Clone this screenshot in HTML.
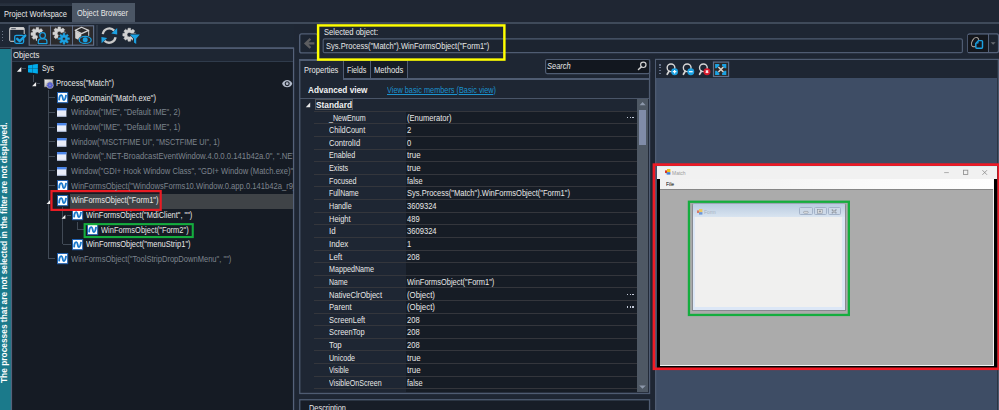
<!DOCTYPE html>
<html>
<head>
<meta charset="utf-8">
<title>Object Browser</title>
<style>
html,body{margin:0;padding:0;}
body{width:999px;height:410px;overflow:hidden;background:#1e2633;font-family:"Liberation Sans",sans-serif;font-size:8.6px;color:#e8e8e8;position:relative;}
.a{position:absolute;box-sizing:border-box;}
.t{position:absolute;white-space:nowrap;line-height:12px;height:12px;transform-origin:0 50%;}
svg{position:absolute;overflow:visible;}
</style>
</head>
<body>
<!-- ===== top strip and tabs ===== -->
<div class="a" style="left:0;top:0;width:999px;height:23px;background:#1f2633;"></div>
<div class="a" style="left:0;top:3.4px;width:72px;height:3px;background:linear-gradient(#232b38,#2b3442);"></div>
<div class="a" style="left:0;top:6px;width:72px;height:16.5px;background:#131a24;"></div>
<div class="a" style="left:71.8px;top:2.8px;width:63.2px;height:20.2px;background:#4b5665;"></div>
<div class="a" style="left:0;top:21.9px;width:999px;height:1.9px;background:#3f4a5a;"></div>

<!-- ===== left toolbar ===== -->
<div class="a" style="left:0;top:24px;width:294px;height:23.4px;background:#1e2734;"></div>
<div class="a" style="left:0;top:47.2px;width:294px;height:1.3px;background:#3a4656;"></div>
<div class="a" style="left:1.5px;top:30.7px;width:1.7px;height:1.3px;background:#6a7688;"></div>
<div class="a" style="left:1.5px;top:33.7px;width:1.7px;height:1.3px;background:#6a7688;"></div>
<div class="a" style="left:1.5px;top:36.6px;width:1.7px;height:1.3px;background:#6a7688;"></div>
<div class="a" style="left:1.5px;top:39.5px;width:1.7px;height:1.3px;background:#6a7688;"></div>
<svg style="left:0;top:0;" width="1" height="1"><rect x="29.20" y="25.80" width="64.40" height="19.40" rx="0.00" fill="#2b2a2c" stroke="#5f6d86" stroke-width="1.20"/></svg>
<div class="a" style="left:50.1px;top:25.2px;width:1px;height:20.6px;background:#5f6d86;"></div>
<div class="a" style="left:71.9px;top:25.2px;width:1px;height:20.6px;background:#5f6d86;"></div>
<div class="a" style="left:96.2px;top:25.4px;width:1.6px;height:20.6px;background:#2e3846;"></div>
<svg style="left:0;top:0;" width="160" height="50" viewBox="0 0 160 50"><path d="M14,41.3 H10.6 Q9.7,41.3 9.7,40.4 V28.5 Q9.7,27.6 10.6,27.6 H23.3 Q24.2,27.6 24.2,28.5 V34" fill="none" stroke="#d2d2d2" stroke-width="1"/><rect x="10" y="27.6" width="14" height="2.3" fill="#d2d2d2"/><rect x="11.2" y="28.3" width="4.6" height="0.9" fill="#3a4250"/><rect x="14.7" y="35.3" width="8.9" height="8" rx="1.5" fill="none" stroke="#1ba1e2" stroke-width="1.3"/><path d="M17.2,38.8 L19.7,41.2 L25.2,35.6" fill="none" stroke="#1ba1e2" stroke-width="2.4" stroke-linecap="round" stroke-linejoin="round"/><path d="M42.09,32.60 L43.78,32.73 L43.78,35.27 L42.09,35.40 L41.71,36.33 L42.80,37.61 L41.01,39.40 L39.73,38.31 L38.80,38.69 L38.67,40.38 L36.13,40.38 L36.00,38.69 L35.07,38.31 L33.79,39.40 L32.00,37.61 L33.09,36.33 L32.71,35.40 L31.02,35.27 L31.02,32.73 L32.71,32.60 L33.09,31.67 L32.00,30.39 L33.79,28.60 L35.07,29.69 L36.00,29.31 L36.13,27.62 L38.67,27.62 L38.80,29.31 L39.73,29.69 L41.01,28.60 L42.80,30.39 L41.71,31.67Z M35.30,34.00 a2.10,2.10 0 1,0 4.20,0 a2.10,2.10 0 1,0 -4.20,0Z" fill="#d2d2d2" fill-rule="evenodd" stroke="#d2d2d2" stroke-width="0.5" stroke-linejoin="round"/><circle cx="42.6" cy="37" r="5" fill="#2b2a2c"/><rect x="37" y="38" width="11.5" height="7" fill="#2b2a2c"/><circle cx="42.6" cy="35.5" r="2.8" fill="none" stroke="#1ba1e2" stroke-width="1.2"/><path d="M38.3,43.6 V41.6 Q38.3,38.9 41,38.9 H44.2 Q46.9,38.9 46.9,41.6 V43.6 Z" fill="none" stroke="#1ba1e2" stroke-width="1.2" stroke-linejoin="round"/><path d="M63.99,32.00 L65.68,32.13 L65.68,34.67 L63.99,34.80 L63.61,35.73 L64.70,37.01 L62.91,38.80 L61.63,37.71 L60.70,38.09 L60.57,39.78 L58.03,39.78 L57.90,38.09 L56.97,37.71 L55.69,38.80 L53.90,37.01 L54.99,35.73 L54.61,34.80 L52.92,34.67 L52.92,32.13 L54.61,32.00 L54.99,31.07 L53.90,29.79 L55.69,28.00 L56.97,29.09 L57.90,28.71 L58.03,27.02 L60.57,27.02 L60.70,28.71 L61.63,29.09 L62.91,28.00 L64.70,29.79 L63.61,31.07Z M57.20,33.40 a2.10,2.10 0 1,0 4.20,0 a2.10,2.10 0 1,0 -4.20,0Z" fill="#d2d2d2" fill-rule="evenodd" stroke="#d2d2d2" stroke-width="0.5" stroke-linejoin="round"/><circle cx="64" cy="38.7" r="6.4" fill="#2b2a2c"/><path d="M67.58,37.78 L69.43,37.84 L69.43,39.56 L67.58,39.62 L67.18,40.58 L68.45,41.93 L67.23,43.15 L65.88,41.88 L64.92,42.28 L64.86,44.13 L63.14,44.13 L63.08,42.28 L62.12,41.88 L60.77,43.15 L59.55,41.93 L60.82,40.58 L60.42,39.62 L58.57,39.56 L58.57,37.84 L60.42,37.78 L60.82,36.82 L59.55,35.47 L60.77,34.25 L62.12,35.52 L63.08,35.12 L63.14,33.27 L64.86,33.27 L64.92,35.12 L65.88,35.52 L67.23,34.25 L68.45,35.47 L67.18,36.82Z M62.50,38.70 a1.50,1.50 0 1,0 3.00,0 a1.50,1.50 0 1,0 -3.00,0Z" fill="#1ba1e2" fill-rule="evenodd" stroke="#1ba1e2" stroke-width="0.5" stroke-linejoin="round"/><polygon points="81.5,27.3 88.7,30.4 81.5,33.6 75.2,30.4" fill="#2b2a2c" stroke="#d2d2d2" stroke-width="1.2" stroke-linejoin="round"/><polygon points="75.2,30.9 81.3,34 81.3,41.3 75.2,38.2" fill="#d2d2d2"/><path d="M88.7,30.6 V36" fill="none" stroke="#d2d2d2" stroke-width="1"/><ellipse cx="85.2" cy="39.9" rx="7" ry="4.6" fill="#2b2a2c"/><ellipse cx="85.2" cy="39.9" rx="6.0" ry="3.5" fill="none" stroke="#1ba1e2" stroke-width="1.2"/><circle cx="85.2" cy="39.7" r="2.5" fill="#1ba1e2"/><path d="M102.8,34.2 A6.6,6.6 0 0 1 114.2,30.6" fill="none" stroke="#c9c9c9" stroke-width="2.3"/><path d="M115.6,37.3 A6.6,6.6 0 0 1 104.6,40.9" fill="none" stroke="#c9c9c9" stroke-width="2.3"/><polygon points="117.2,28 117.2,34.6 111.3,33.6" fill="#1ba1e2"/><polygon points="101.4,37 107.2,37.9 101.6,43.2" fill="#1ba1e2"/><path d="M134.09,33.27 L135.77,33.41 L135.77,35.99 L134.09,36.13 L133.70,37.07 L134.79,38.37 L132.97,40.19 L131.67,39.10 L130.73,39.49 L130.59,41.17 L128.01,41.17 L127.87,39.49 L126.93,39.10 L125.63,40.19 L123.81,38.37 L124.90,37.07 L124.51,36.13 L122.83,35.99 L122.83,33.41 L124.51,33.27 L124.90,32.33 L123.81,31.03 L125.63,29.21 L126.93,30.30 L127.87,29.91 L128.01,28.23 L130.59,28.23 L130.73,29.91 L131.67,30.30 L132.97,29.21 L134.79,31.03 L133.70,32.33Z M127.00,34.70 a2.30,2.30 0 1,0 4.60,0 a2.30,2.30 0 1,0 -4.60,0Z" fill="#d2d2d2" fill-rule="evenodd" stroke="#d2d2d2" stroke-width="0.5" stroke-linejoin="round"/><polygon points="128.6,33.6 141,33.6 137,38.4 137,44.6 133,43 133,38.4" fill="#1e2734"/><polygon points="129.9,34.4 139.8,34.4 136.2,38.8 136.2,43.9 134,42.4 134,38.8" fill="#1ba1e2"/></svg>

<!-- ===== left sidebar + tree ===== -->
<div class="a" style="left:0;top:48.5px;width:10.6px;height:362px;background:#1b7a8b;"></div>
<svg style="left:0;top:0;" width="1" height="1"><rect x="11.45" y="48.25" width="282.10" height="364.70" rx="0.00" fill="#151b24" stroke="#55627a" stroke-width="1.30"/></svg>
<div class="a" style="left:12px;top:49px;width:281px;height:12.4px;background:#1e2633;"></div>
<div class="a" style="left:12px;top:61.2px;width:281px;height:1px;background:#2f3b4b;"></div>
<!-- selected row -->
<div class="a" style="left:70px;top:193.7px;width:223px;height:15.2px;background:#3f4347;"></div>
<svg style="left:0;top:0;" width="1" height="1"><polygon points="21.3,67.1 21.3,71.8 16.9,71.8" fill="#f0f0f0"/></svg>
<div class="a" style="left:22.2px;top:68.0px;width:3.6px;height:0.9px;background:#414a56;"></div>
<svg style="left:28.3px;top:64px;" width="9.8" height="9.6" viewBox="0 0 9.8 9.6"><polygon points="0,1.4 9.8,0 9.8,9.6 0,8.2" fill="#0a5f82"/><polygon points="0,1.4 4.35,0.78 4.35,4.55 0,4.55" fill="#00adee"/><polygon points="4.8,0.72 9.8,0 9.8,4.55 4.8,4.55" fill="#00adee"/><polygon points="0,5.0 4.35,5.0 4.35,8.82 0,8.2" fill="#00adee"/><polygon points="4.8,5.0 9.8,5.0 9.8,9.6 4.8,8.88" fill="#00adee"/></svg>
<div class="a" style="left:33.0px;top:75.0px;width:0.9px;height:7.2px;background:#414a56;"></div>
<svg style="left:0;top:0;" width="1" height="1"><polygon points="36.1,82.0 36.1,86.3 32.1,86.3" fill="#f0f0f0"/></svg>
<div class="a" style="left:37.2px;top:82.7px;width:3.2px;height:0.9px;background:#414a56;"></div>
<svg style="left:43.6px;top:78.8px;" width="9.8" height="9.8" viewBox="0 0 9.8 9.8"><defs><linearGradient id="pg" x1="0" y1="0" x2="1" y2="1"><stop offset="0" stop-color="#f4f4f4"/><stop offset="1" stop-color="#9a9a9a"/></linearGradient></defs><rect x="0.3" y="0.3" width="8.6" height="7.6" fill="url(#pg)" stroke="#7b7b7b" stroke-width="0.6"/><circle cx="6" cy="6.3" r="3.5" fill="#d9cf9c" opacity="0.9"/><path d="M8.11,5.67 L9.14,5.68 L9.14,6.92 L8.11,6.93 L7.94,7.34 L8.66,8.08 L7.78,8.96 L7.04,8.24 L6.63,8.41 L6.62,9.44 L5.38,9.44 L5.37,8.41 L4.96,8.24 L4.22,8.96 L3.34,8.08 L4.06,7.34 L3.89,6.93 L2.86,6.92 L2.86,5.68 L3.89,5.67 L4.06,5.26 L3.34,4.52 L4.22,3.64 L4.96,4.36 L5.37,4.19 L5.38,3.16 L6.62,3.16 L6.63,4.19 L7.04,4.36 L7.78,3.64 L8.66,4.52 L7.94,5.26Z M5.20,6.30 a0.80,0.80 0 1,0 1.60,0 a0.80,0.80 0 1,0 -1.60,0Z" fill="#5560d4" fill-rule="evenodd" stroke="#5560d4" stroke-width="0.5" stroke-linejoin="round"/></svg>
<div class="a" style="left:47.5px;top:90.0px;width:0.9px;height:168.9px;background:#414a56;"></div>
<div class="a" style="left:48.4px;top:97.2px;width:6.8px;height:0.9px;background:#414a56;"></div>
<div class="a" style="left:48.4px;top:111.9px;width:6.8px;height:0.9px;background:#414a56;"></div>
<div class="a" style="left:48.4px;top:126.5px;width:6.8px;height:0.9px;background:#414a56;"></div>
<div class="a" style="left:48.4px;top:141.2px;width:6.8px;height:0.9px;background:#414a56;"></div>
<div class="a" style="left:48.4px;top:155.8px;width:6.8px;height:0.9px;background:#414a56;"></div>
<div class="a" style="left:48.4px;top:170.4px;width:6.8px;height:0.9px;background:#414a56;"></div>
<div class="a" style="left:48.4px;top:185.1px;width:6.8px;height:0.9px;background:#414a56;"></div>
<div class="a" style="left:48.4px;top:258.4px;width:6.8px;height:0.9px;background:#414a56;"></div>
<svg style="left:56.6px;top:92.4px;" width="11.2" height="11.2" viewBox="0 0 11.2 11.2"><rect x="0.5" y="0.5" width="10.2" height="10.2" fill="#fdfdff" stroke="#1f5fae" stroke-width="1"/><path d="M2.1,8.4 C2.3,4.4 3.2,3.0 4.4,3.1 C6.2,3.3 5.2,8.1 7.0,8.1 C8.4,8.1 8.7,5.0 9.1,2.8" fill="none" stroke="#1878cc" stroke-width="1.8" stroke-linecap="butt"/></svg>
<svg style="left:57.3px;top:108.2px;" width="9.4" height="8.6" viewBox="0 0 9.4 8.6"><rect x="0" y="0" width="9.4" height="8.6" fill="#e9edf9"/><rect x="0" y="0" width="9.4" height="2.4" fill="#4b86ea"/><rect x="0" y="7.8" width="9.4" height="0.8" fill="#b6c4e6"/></svg>
<svg style="left:57.3px;top:122.8px;" width="9.4" height="8.6" viewBox="0 0 9.4 8.6"><rect x="0" y="0" width="9.4" height="8.6" fill="#e9edf9"/><rect x="0" y="0" width="9.4" height="2.4" fill="#4b86ea"/><rect x="0" y="7.8" width="9.4" height="0.8" fill="#b6c4e6"/></svg>
<svg style="left:57.3px;top:137.5px;" width="9.4" height="8.6" viewBox="0 0 9.4 8.6"><rect x="0" y="0" width="9.4" height="8.6" fill="#e9edf9"/><rect x="0" y="0" width="9.4" height="2.4" fill="#4b86ea"/><rect x="0" y="7.8" width="9.4" height="0.8" fill="#b6c4e6"/></svg>
<svg style="left:57.3px;top:152.1px;" width="9.4" height="8.6" viewBox="0 0 9.4 8.6"><rect x="0" y="0" width="9.4" height="8.6" fill="#e9edf9"/><rect x="0" y="0" width="9.4" height="2.4" fill="#4b86ea"/><rect x="0" y="7.8" width="9.4" height="0.8" fill="#b6c4e6"/></svg>
<svg style="left:57.3px;top:166.8px;" width="9.4" height="8.6" viewBox="0 0 9.4 8.6"><rect x="0" y="0" width="9.4" height="8.6" fill="#e9edf9"/><rect x="0" y="0" width="9.4" height="2.4" fill="#4b86ea"/><rect x="0" y="7.8" width="9.4" height="0.8" fill="#b6c4e6"/></svg>
<svg style="left:56.6px;top:180.0px;" width="11.2" height="11.2" viewBox="0 0 11.2 11.2"><rect x="0.5" y="0.5" width="10.2" height="10.2" fill="#fdfdff" stroke="#1f5fae" stroke-width="1"/><path d="M2.1,8.4 C2.3,4.4 3.2,3.0 4.4,3.1 C6.2,3.3 5.2,8.1 7.0,8.1 C8.4,8.1 8.7,5.0 9.1,2.8" fill="none" stroke="#1878cc" stroke-width="1.8" stroke-linecap="butt"/></svg>
<svg style="left:0;top:0;" width="1" height="1"><polygon points="50.2,199.9 50.2,203.9 46.5,203.9" fill="#f0f0f0"/></svg>
<svg style="left:56.6px;top:194.7px;" width="11.2" height="11.2" viewBox="0 0 11.2 11.2"><rect x="0.5" y="0.5" width="10.2" height="10.2" fill="#fdfdff" stroke="#1f5fae" stroke-width="1"/><path d="M2.1,8.4 C2.3,4.4 3.2,3.0 4.4,3.1 C6.2,3.3 5.2,8.1 7.0,8.1 C8.4,8.1 8.7,5.0 9.1,2.8" fill="none" stroke="#1878cc" stroke-width="1.8" stroke-linecap="butt"/></svg>
<div class="a" style="left:62.2px;top:207.2px;width:0.9px;height:37.0px;background:#414a56;"></div>
<div class="a" style="left:63.1px;top:243.8px;width:7.5px;height:0.9px;background:#414a56;"></div>
<svg style="left:0;top:0;" width="1" height="1"><polygon points="65.4,214.7 65.4,218.8 61.6,218.8" fill="#f0f0f0"/></svg>
<div class="a" style="left:67.0px;top:214.5px;width:3.5px;height:0.9px;background:#414a56;"></div>
<svg style="left:71.5px;top:209.3px;" width="11.2" height="11.2" viewBox="0 0 11.2 11.2"><rect x="0.5" y="0.5" width="10.2" height="10.2" fill="#fdfdff" stroke="#1f5fae" stroke-width="1"/><path d="M2.1,8.4 C2.3,4.4 3.2,3.0 4.4,3.1 C6.2,3.3 5.2,8.1 7.0,8.1 C8.4,8.1 8.7,5.0 9.1,2.8" fill="none" stroke="#1878cc" stroke-width="1.8" stroke-linecap="butt"/></svg>
<div class="a" style="left:77.0px;top:221.9px;width:0.9px;height:7.7px;background:#414a56;"></div>
<div class="a" style="left:77.9px;top:229.2px;width:7.5px;height:0.9px;background:#414a56;"></div>
<svg style="left:86.6px;top:224.0px;" width="11.2" height="11.2" viewBox="0 0 11.2 11.2"><rect x="0.5" y="0.5" width="10.2" height="10.2" fill="#fdfdff" stroke="#1f5fae" stroke-width="1"/><path d="M2.1,8.4 C2.3,4.4 3.2,3.0 4.4,3.1 C6.2,3.3 5.2,8.1 7.0,8.1 C8.4,8.1 8.7,5.0 9.1,2.8" fill="none" stroke="#1878cc" stroke-width="1.8" stroke-linecap="butt"/></svg>
<svg style="left:71.5px;top:238.6px;" width="11.2" height="11.2" viewBox="0 0 11.2 11.2"><rect x="0.5" y="0.5" width="10.2" height="10.2" fill="#fdfdff" stroke="#1f5fae" stroke-width="1"/><path d="M2.1,8.4 C2.3,4.4 3.2,3.0 4.4,3.1 C6.2,3.3 5.2,8.1 7.0,8.1 C8.4,8.1 8.7,5.0 9.1,2.8" fill="none" stroke="#1878cc" stroke-width="1.8" stroke-linecap="butt"/></svg>
<svg style="left:56.6px;top:253.3px;" width="11.2" height="11.2" viewBox="0 0 11.2 11.2"><rect x="0.5" y="0.5" width="10.2" height="10.2" fill="#fdfdff" stroke="#1f5fae" stroke-width="1"/><path d="M2.1,8.4 C2.3,4.4 3.2,3.0 4.4,3.1 C6.2,3.3 5.2,8.1 7.0,8.1 C8.4,8.1 8.7,5.0 9.1,2.8" fill="none" stroke="#1878cc" stroke-width="1.8" stroke-linecap="butt"/></svg>
<svg style="left:0;top:0;" width="1" height="1"><rect x="51.50" y="191.10" width="109.20" height="18.80" rx="0.00" fill="none" stroke="#e81c24" stroke-width="2.20"/></svg>
<svg style="left:0;top:0;" width="1" height="1"><rect x="84.65" y="224.15" width="108.10" height="12.90" rx="0.00" fill="none" stroke="#14ad3e" stroke-width="2.10"/></svg>
<svg style="left:282px;top:80.3px;" width="10.4" height="7.4" viewBox="0 0 10.4 7.4"><path d="M0.1,3.7 C1.8,-1.1 8.6,-1.1 10.3,3.7 C8.6,8.5 1.8,8.5 0.1,3.7Z" fill="#b4bccb"/><circle cx="5.2" cy="3.7" r="2.5" fill="#1c222c"/><circle cx="5.2" cy="3.7" r="1.4" fill="#b4bccb"/></svg>

<!-- ===== selected object ===== -->
<svg style="left:0;top:0;" width="1" height="1"><rect x="299.70" y="33.90" width="18.00" height="19.00" rx="2.00" fill="#1d2532" stroke="#525f76" stroke-width="1.40"/></svg>
<svg style="left:0;top:0;" width="1" height="1"><path d="M314.4,43.4 H306.4 M310.4,38.9 L305.6,43.4 L310.4,47.9" fill="none" stroke="#5c5d60" stroke-width="2.3" stroke-linecap="butt" stroke-linejoin="miter"/></svg>
<svg style="left:0;top:0;" width="1" height="1"><rect x="323.20" y="38.90" width="639.20" height="13.80" rx="1.50" fill="#1c2430" stroke="#4f5c72" stroke-width="1.20"/></svg>
<svg style="left:0;top:0;" width="1" height="1"><rect x="967.85" y="33.95" width="30.70" height="18.70" rx="2.00" fill="#1c2430" stroke="#55627a" stroke-width="1.30"/></svg>
<div class="a" style="left:968.2px;top:34.5px;width:19.4px;height:17.6px;background:#14171d;"></div>
<div class="a" style="left:987.7px;top:34.3px;width:1px;height:18px;background:#55627a;"></div>
<svg style="left:0;top:0;" width="1" height="1">
<ellipse cx="975.1" cy="42.1" rx="3.1" ry="5.0" transform="rotate(28 975.1 42.1)" fill="none" stroke="#b1aaa3" stroke-width="1.05"/>
<path d="M978.6,40.6 H981.6 Q982.5,40.6 982.5,41.5 V47.3 Q982.5,48.2 981.6,48.2 H976.7 Q975.8,48.2 975.8,47.3 V43.6 Z" fill="#14171d" stroke="#1ba1e2" stroke-width="1.45" stroke-linejoin="round"/>
<path d="M978.2,41.6 V43.2 H976.6" fill="none" stroke="#1ba1e2" stroke-width="0.8"/>
<polygon points="990.6,42.3 995.6,42.3 993.1,44.8" fill="#666a70"/>
</svg>

<!-- ===== properties panel ===== -->
<svg style="left:0;top:0;" width="1" height="1"><rect x="299.75" y="60.05" width="349.80" height="333.40" rx="0.00" fill="none" stroke="#4f5c72" stroke-width="1.30"/></svg>
<div class="a" style="left:408.1px;top:59px;width:240.8px;height:19.2px;background:#1e2633;"></div>
<div class="a" style="left:343px;top:59.5px;width:65px;height:19.4px;background:#161c25;"></div>
<div class="a" style="left:299.1px;top:59.4px;width:109px;height:1.3px;background:#4f5c72;"></div>
<div class="a" style="left:343px;top:59.5px;width:1.4px;height:19.8px;background:#4f5c72;"></div>
<div class="a" style="left:369.9px;top:59.5px;width:1.4px;height:19.8px;background:#4f5c72;"></div>
<div class="a" style="left:406.7px;top:59.5px;width:1.4px;height:19.8px;background:#4f5c72;"></div>
<div class="a" style="left:343px;top:78.2px;width:307px;height:1.4px;background:#4f5c72;"></div>
<!-- search -->
<svg style="left:0;top:0;" width="1" height="1"><rect x="545.60" y="59.50" width="104.00" height="14.10" rx="1.50" fill="#12171f" stroke="#4f5c72" stroke-width="1.20"/></svg>
<svg style="left:0;top:0;" width="1" height="1"><circle cx="643.3" cy="64.8" r="2.7" fill="none" stroke="#cfcfcf" stroke-width="1.2"/><path d="M641.3,66.9 L638.5,69.5" stroke="#cfcfcf" stroke-width="1.5" stroke-linecap="round"/></svg>
<!-- grid -->
<div class="a" style="left:300.4px;top:97.5px;width:348.6px;height:1.2px;background:#4a5568;"></div>
<div class="a" style="left:405.6px;top:111px;width:231.4px;height:280.6px;background:#161c25;"></div>
<div class="a" style="left:314px;top:110.7px;width:322.8px;height:1px;background:#34363c;"></div>
<div class="a" style="left:314px;top:123.3px;width:322.8px;height:1px;background:#34363c;"></div>
<div class="a" style="left:314px;top:135.9px;width:322.8px;height:1px;background:#34363c;"></div>
<div class="a" style="left:314px;top:148.5px;width:322.8px;height:1px;background:#34363c;"></div>
<div class="a" style="left:314px;top:161.2px;width:322.8px;height:1px;background:#34363c;"></div>
<div class="a" style="left:314px;top:173.8px;width:322.8px;height:1px;background:#34363c;"></div>
<div class="a" style="left:314px;top:186.4px;width:322.8px;height:1px;background:#34363c;"></div>
<div class="a" style="left:314px;top:199.0px;width:322.8px;height:1px;background:#34363c;"></div>
<div class="a" style="left:314px;top:211.6px;width:322.8px;height:1px;background:#34363c;"></div>
<div class="a" style="left:314px;top:224.2px;width:322.8px;height:1px;background:#34363c;"></div>
<div class="a" style="left:314px;top:236.9px;width:322.8px;height:1px;background:#34363c;"></div>
<div class="a" style="left:314px;top:249.5px;width:322.8px;height:1px;background:#34363c;"></div>
<div class="a" style="left:314px;top:262.1px;width:322.8px;height:1px;background:#34363c;"></div>
<div class="a" style="left:314px;top:274.7px;width:322.8px;height:1px;background:#34363c;"></div>
<div class="a" style="left:314px;top:287.3px;width:322.8px;height:1px;background:#34363c;"></div>
<div class="a" style="left:314px;top:299.9px;width:322.8px;height:1px;background:#34363c;"></div>
<div class="a" style="left:314px;top:312.5px;width:322.8px;height:1px;background:#34363c;"></div>
<div class="a" style="left:314px;top:325.2px;width:322.8px;height:1px;background:#34363c;"></div>
<div class="a" style="left:314px;top:337.8px;width:322.8px;height:1px;background:#34363c;"></div>
<div class="a" style="left:314px;top:350.4px;width:322.8px;height:1px;background:#34363c;"></div>
<div class="a" style="left:314px;top:363.0px;width:322.8px;height:1px;background:#34363c;"></div>
<div class="a" style="left:314px;top:375.6px;width:322.8px;height:1px;background:#34363c;"></div>
<div class="a" style="left:314px;top:388.2px;width:322.8px;height:1px;background:#34363c;"></div>
<svg style="left:0;top:0;" width="1" height="1"><polygon points="310.2,102.6 310.2,107.2 305.8,107.2" fill="#e8e8e8"/></svg>
<div class="a" style="left:314.9px;top:99.1px;width:38.5px;height:10.7px;border:1px solid #50545a;"></div>
<div class="a" style="left:626.9px;top:116.8px;width:1.5px;height:1.5px;background:#c3cad8;"></div>
<div class="a" style="left:629.6px;top:116.8px;width:1.5px;height:1.5px;background:#c3cad8;"></div>
<div class="a" style="left:632.3px;top:116.8px;width:1.5px;height:1.5px;background:#c3cad8;"></div>
<div class="a" style="left:626.9px;top:293.8px;width:1.5px;height:1.5px;background:#c3cad8;"></div>
<div class="a" style="left:629.6px;top:293.8px;width:1.5px;height:1.5px;background:#c3cad8;"></div>
<div class="a" style="left:632.3px;top:293.8px;width:1.5px;height:1.5px;background:#c3cad8;"></div>
<div class="a" style="left:626.9px;top:306.4px;width:1.5px;height:1.5px;background:#c3cad8;"></div>
<div class="a" style="left:629.6px;top:306.4px;width:1.5px;height:1.5px;background:#c3cad8;"></div>
<div class="a" style="left:632.3px;top:306.4px;width:1.5px;height:1.5px;background:#c3cad8;"></div>
<!-- scrollbar -->
<div class="a" style="left:636.6px;top:98.8px;width:11.8px;height:293.4px;background:#4e5864;"></div>
<div class="a" style="left:638.9px;top:110px;width:7.5px;height:35px;background:#808ca8;"></div>
<svg style="left:0;top:0;" width="1" height="1"><polygon points="639.6,105.2 645.6,105.2 642.6,101.9" fill="#8d98ab"/><polygon points="639.2,385.4 645.8,385.4 642.5,388.8" fill="#8d98ab"/></svg>
<!-- description -->
<svg style="left:0;top:0;" width="1" height="1"><rect x="299.75" y="399.75" width="349.80" height="18.70" rx="0.00" fill="#171d27" stroke="#4f5c72" stroke-width="1.30"/></svg>

<!-- ===== preview panel ===== -->
<svg style="left:0;top:0;" width="1" height="1"><rect x="655.65" y="59.45" width="343.10" height="358.70" rx="0.00" fill="#3e4d65" stroke="#4f5c72" stroke-width="1.30"/></svg>
<div class="a" style="left:997.3px;top:60px;width:0.9px;height:352px;background:#2c3543;"></div>
<div class="a" style="left:656.3px;top:60.1px;width:341px;height:17.7px;background:#1e2633;"></div>
<div class="a" style="left:659.0px;top:64.4px;width:1.5px;height:1.2px;background:#66728a;"></div>
<div class="a" style="left:659.0px;top:67.3px;width:1.5px;height:1.2px;background:#66728a;"></div>
<div class="a" style="left:659.0px;top:70.2px;width:1.5px;height:1.2px;background:#66728a;"></div>
<div class="a" style="left:659.0px;top:73.1px;width:1.5px;height:1.2px;background:#66728a;"></div>
<svg style="left:0;top:0;" width="1" height="1"><circle cx="671.0" cy="67.8" r="3.85" fill="none" stroke="#d6d6d6" stroke-width="1.4"/><path d="M669.0,71.2 L667.2,74.3" stroke="#d6d6d6" stroke-width="1.7" stroke-linecap="round"/><circle cx="674.6" cy="71.7" r="3.45" fill="#1ba1e2"/><path d="M672.8,71.7 h3.6 M674.6,69.9 v3.6" stroke="#fff" stroke-width="1.2"/><circle cx="687.2" cy="67.8" r="3.85" fill="none" stroke="#d6d6d6" stroke-width="1.4"/><path d="M685.2,71.2 L683.4,74.3" stroke="#d6d6d6" stroke-width="1.7" stroke-linecap="round"/><circle cx="690.8" cy="71.7" r="3.45" fill="#1ba1e2"/><path d="M688.9,71.7 h3.8" stroke="#fff" stroke-width="1.2"/><circle cx="703.4" cy="67.8" r="3.85" fill="none" stroke="#d6d6d6" stroke-width="1.4"/><path d="M701.4,71.2 L699.6,74.3" stroke="#d6d6d6" stroke-width="1.7" stroke-linecap="round"/><circle cx="707.0" cy="71.7" r="3.45" fill="#d81a2c"/><path d="M705.8,70.5 l2.4,2.4 M708.2,70.5 l-2.4,2.4" stroke="#fff" stroke-width="1.1"/></svg>
<svg style="left:0;top:0;" width="1" height="1"><rect x="713.50" y="62.10" width="15.10" height="14.40" rx="0.00" fill="#2a2829" stroke="#5f6f8a" stroke-width="1.20"/></svg>
<svg style="left:0;top:0;" width="1" height="1"><polygon points="715.1,64.0 719.3,64.0 719.3,65.6 716.7,68.2 715.1,68.2" fill="#1ba1e2"/><polygon points="726.3,64.0 722.1,64.0 722.1,65.6 724.7,68.2 726.3,68.2" fill="#1ba1e2"/><polygon points="715.1,74.9 719.3,74.9 719.3,73.3 716.7,70.7 715.1,70.7" fill="#1ba1e2"/><polygon points="726.3,74.9 722.1,74.9 722.1,73.3 724.7,70.7 726.3,70.7" fill="#1ba1e2"/><path d="M718.4,67.0 L723.4,72.0 M723.4,67.0 L718.4,72.0" stroke="#d9d3cc" stroke-width="1.6"/></svg>
<div class="a" style="left:656.7px;top:165.6px;width:340.2px;height:13.4px;background:#f1f1f1;border-top:0.9px solid #d8f0f4;"></div>
<div class="a" style="left:656.9px;top:179.0px;width:3.5px;height:188.0px;background:#000;"></div>
<div class="a" style="left:994.2px;top:179.0px;width:2.8px;height:188.0px;background:#000;"></div>
<div class="a" style="left:660.4px;top:178.8px;width:333.8px;height:10.2px;background:linear-gradient(90deg,#f1f1f1 0%,#f4f4f4 35%,#fafafa 65%,#fefefe 100%);"></div>
<div class="a" style="left:660.4px;top:189.0px;width:332.8px;height:176.6px;background:#ababab;border-top:1px solid #868686;"></div>
<div class="a" style="left:660.0px;top:365.4px;width:334.0px;height:1.0px;background:#f0f0f0;"></div>
<div class="a" style="left:993.0px;top:189.0px;width:1.0px;height:177.4px;background:#f0f0f0;"></div>
<div class="a" style="left:656.8px;top:366.4px;width:340.2px;height:1.4px;background:#000;"></div>
<svg style="left:664.6px;top:169.4px;" width="5.6" height="5.8" viewBox="0 0 5.6 5.8"><rect x="0" y="1.4" width="2.2" height="2.6" fill="#d63a2a"/><rect x="2" y="0" width="3.4" height="3.2" fill="#f2c21a"/><rect x="2" y="3.2" width="3.4" height="2.4" fill="#3a7ad8"/><rect x="0.8" y="4" width="1.4" height="1.4" fill="#9ab0d8"/></svg>
<svg style="left:0;top:0;" width="1" height="1"><path d="M944.2,172.6 h4.6" stroke="#9a9a9a" stroke-width="0.8"/><rect x="963.4" y="170.2" width="4.4" height="4.4" fill="none" stroke="#8a8a8a" stroke-width="0.8"/><path d="M982.4,170.2 l4.6,4.6 M987,170.2 l-4.6,4.6" stroke="#8a8a8a" stroke-width="0.8"/></svg>
<div class="a" style="left:692.1px;top:203.4px;width:154.0px;height:107.5px;background:#dce7f6;border:1.1px solid #868a90;border-top-color:#9aa6b6;border-radius:2.5px 2.5px 0 0;"></div>
<div class="a" style="left:693.2px;top:204.4px;width:151.8px;height:12.4px;background:linear-gradient(#b9cbe0,#d9e4f0);border-radius:1.5px 1.5px 0 0;"></div>
<div class="a" style="left:695.0px;top:216.8px;width:147.0px;height:90.3px;background:#f0f0ef;"></div>
<svg style="left:696.8px;top:208.7px;" width="5.6" height="5.8" viewBox="0 0 5.6 5.8"><rect x="0" y="1.4" width="2.2" height="2.6" fill="#d67a6a"/><rect x="2" y="0" width="3.4" height="3.2" fill="#ecc860"/><rect x="2" y="3.2" width="3.4" height="2.4" fill="#6a96d8"/></svg>
<div class="a" style="left:799.3px;top:207.3px;width:13.3px;height:8.2px;background:#cdd9e8;border:1px solid #a3b2c8;border-radius:1.5px;"></div>
<div class="a" style="left:813.5px;top:207.3px;width:13.3px;height:8.2px;background:#cdd9e8;border:1px solid #a3b2c8;border-radius:1.5px;"></div>
<div class="a" style="left:827.7px;top:207.3px;width:13.3px;height:8.2px;background:#cdd9e8;border:1px solid #a3b2c8;border-radius:1.5px;"></div>
<svg style="left:0;top:0;" width="1" height="1"><rect x="803.6" y="211.4" width="4.6" height="1.8" rx="0.8" fill="#e8e8e8" stroke="#858d99" stroke-width="0.6"/><rect x="817.6" y="209.4" width="4.6" height="3.8" fill="#e4e4e4" stroke="#858d99" stroke-width="0.6"/><rect x="818.8" y="210.6" width="2.2" height="1.6" fill="#9098a4"/><path d="M831.8,209.4 l4.6,3.8 M836.4,209.4 l-4.6,3.8" stroke="#858d99" stroke-width="1.3"/><path d="M832.6,209.9 l3,2.8 M835.6,209.9 l-3,2.8" stroke="#e8e8e8" stroke-width="0.5"/></svg>
<svg style="left:0;top:0;" width="1" height="1"><rect x="688.95" y="201.75" width="159.90" height="113.20" rx="0.00" fill="none" stroke="#14ad3e" stroke-width="2.30"/></svg>
<svg style="left:0;top:0;" width="1" height="1"><rect x="653.90" y="164.60" width="344.80" height="204.20" rx="0.00" fill="none" stroke="#f01a24" stroke-width="2.60"/></svg>

<div class="t" style="left:4.0px;top:8.3px;font-size:8.6px;transform:scaleX(0.875);color:#e8e8e8;">Project Workspace</div>
<div class="t" style="left:77.0px;top:6.5px;font-size:8.6px;transform:scaleX(0.868);color:#e8e8e8;">Object Browser</div>
<div class="t" style="left:13.0px;top:49.2px;font-size:8.6px;transform:scaleX(0.903);color:#e8e8e8;">Objects</div>
<div class="t" style="left:41.6px;top:62.4px;font-size:8.6px;transform:scaleX(0.838);color:#e8e8e8;">Sys</div>
<div class="t" style="left:56.0px;top:77.1px;font-size:8.6px;transform:scaleX(0.875);color:#e8e8e8;">Process(&quot;Match&quot;)</div>
<div class="t" style="left:71.0px;top:91.7px;font-size:8.6px;transform:scaleX(0.882);color:#e8e8e8;">AppDomain(&quot;Match.exe&quot;)</div>
<div class="t" style="left:71.0px;top:106.4px;font-size:8.6px;transform:scaleX(0.889);color:#7d848d;">Window(&quot;IME&quot;, &quot;Default IME&quot;, 2)</div>
<div class="t" style="left:71.0px;top:121.0px;font-size:8.6px;transform:scaleX(0.889);color:#7d848d;">Window(&quot;IME&quot;, &quot;Default IME&quot;, 1)</div>
<div class="t" style="left:71.0px;top:135.7px;font-size:8.6px;transform:scaleX(0.852);color:#7d848d;">Window(&quot;MSCTFIME UI&quot;, &quot;MSCTFIME UI&quot;, 1)</div>
<div class="t" style="left:71.0px;top:150.3px;font-size:8.6px;transform:scaleX(0.900);color:#7d848d;overflow:hidden;width:246.8px;">Window(&quot;.NET-BroadcastEventWindow.4.0.0.0.141b42a.0&quot;, &quot;.NET-BroadcastEventWindow.4.0.0.0.141b42a.0&quot;, 1)</div>
<div class="t" style="left:71.0px;top:164.9px;font-size:8.6px;transform:scaleX(0.885);color:#7d848d;overflow:hidden;width:250.9px;">Window(&quot;GDI+ Hook Window Class&quot;, &quot;GDI+ Window (Match.exe)&quot;, 1)</div>
<div class="t" style="left:71.0px;top:179.6px;font-size:8.6px;transform:scaleX(0.886);color:#7d848d;overflow:hidden;width:250.5px;">WinFormsObject(&quot;WindowsForms10.Window.0.app.0.141b42a_r9_ad1&quot;)</div>
<div class="t" style="left:71.0px;top:194.2px;font-size:8.6px;transform:scaleX(0.869);color:#e8e8e8;">WinFormsObject(&quot;Form1&quot;)</div>
<div class="t" style="left:86.0px;top:208.9px;font-size:8.6px;transform:scaleX(0.868);color:#e8e8e8;">WinFormsObject(&quot;MdiClient&quot;, &quot;&quot;)</div>
<div class="t" style="left:100.7px;top:223.6px;font-size:8.6px;transform:scaleX(0.871);color:#e8e8e8;">WinFormsObject(&quot;Form2&quot;)</div>
<div class="t" style="left:86.0px;top:238.2px;font-size:8.6px;transform:scaleX(0.873);color:#e8e8e8;">WinFormsObject(&quot;menuStrip1&quot;)</div>
<div class="t" style="left:71.0px;top:252.9px;font-size:8.6px;transform:scaleX(0.880);color:#7d848d;">WinFormsObject(&quot;ToolStripDropDownMenu&quot;, &quot;&quot;)</div>
<div class="t" style="left:323.8px;top:26.2px;font-size:8.6px;transform:scaleX(0.883);color:#e8e8e8;">Selected object:</div>
<div class="t" style="left:326.4px;top:39.6px;font-size:8.6px;transform:scaleX(0.878);color:#e8e8e8;">Sys.Process(&quot;Match&quot;).WinFormsObject(&quot;Form1&quot;)</div>
<div class="t" style="left:303.8px;top:64.2px;font-size:8.6px;transform:scaleX(0.878);color:#e8e8e8;">Properties</div>
<div class="t" style="left:346.6px;top:64.2px;font-size:8.6px;transform:scaleX(0.841);color:#e8e8e8;">Fields</div>
<div class="t" style="left:373.9px;top:64.2px;font-size:8.6px;transform:scaleX(0.886);color:#e8e8e8;">Methods</div>
<div class="t" style="left:547.3px;top:60.0px;font-size:8.6px;transform:scaleX(0.870);color:#e8e8e8;font-style:italic;">Search</div>
<div class="t" style="left:308.0px;top:83.6px;font-size:8.8px;transform:scaleX(0.936);color:#f2f2f2;font-weight:bold;">Advanced view</div>
<div class="t" style="left:386.6px;top:83.5px;font-size:8.6px;transform:scaleX(0.853);color:#1b93cf;text-decoration:underline;">View basic members (Basic view)</div>
<div class="t" style="left:316.4px;top:99.2px;font-size:8.8px;transform:scaleX(0.944);color:#f2f2f2;font-weight:bold;">Standard</div>
<div class="t" style="left:329.4px;top:111.5px;font-size:8.6px;transform:scaleX(0.824);color:#e8e8e8;">_NewEnum</div>
<div class="t" style="left:407.0px;top:111.5px;font-size:8.6px;transform:scaleX(0.881);color:#e8e8e8;">(Enumerator)</div>
<div class="t" style="left:329.4px;top:124.1px;font-size:8.6px;transform:scaleX(0.851);color:#e8e8e8;">ChildCount</div>
<div class="t" style="left:407.0px;top:124.1px;font-size:8.6px;transform:scaleX(0.878);color:#e8e8e8;">2</div>
<div class="t" style="left:329.4px;top:136.8px;font-size:8.6px;transform:scaleX(0.895);color:#e8e8e8;">ControlId</div>
<div class="t" style="left:407.0px;top:136.8px;font-size:8.6px;transform:scaleX(0.878);color:#e8e8e8;">0</div>
<div class="t" style="left:329.4px;top:149.4px;font-size:8.6px;transform:scaleX(0.831);color:#e8e8e8;">Enabled</div>
<div class="t" style="left:407.0px;top:149.4px;font-size:8.6px;transform:scaleX(0.918);color:#e8e8e8;">true</div>
<div class="t" style="left:329.4px;top:162.1px;font-size:8.6px;transform:scaleX(0.838);color:#e8e8e8;">Exists</div>
<div class="t" style="left:407.0px;top:162.1px;font-size:8.6px;transform:scaleX(0.918);color:#e8e8e8;">true</div>
<div class="t" style="left:329.4px;top:174.7px;font-size:8.6px;transform:scaleX(0.837);color:#e8e8e8;">Focused</div>
<div class="t" style="left:407.0px;top:174.7px;font-size:8.6px;transform:scaleX(0.859);color:#e8e8e8;">false</div>
<div class="t" style="left:329.4px;top:187.3px;font-size:8.6px;transform:scaleX(0.805);color:#e8e8e8;">FullName</div>
<div class="t" style="left:407.0px;top:187.3px;font-size:8.6px;transform:scaleX(0.876);color:#e8e8e8;">Sys.Process(&quot;Match&quot;).WinFormsObject(&quot;Form1&quot;)</div>
<div class="t" style="left:329.4px;top:200.0px;font-size:8.6px;transform:scaleX(0.830);color:#e8e8e8;">Handle</div>
<div class="t" style="left:407.0px;top:200.0px;font-size:8.6px;transform:scaleX(0.884);color:#e8e8e8;">3609324</div>
<div class="t" style="left:329.4px;top:212.6px;font-size:8.6px;transform:scaleX(0.869);color:#e8e8e8;">Height</div>
<div class="t" style="left:407.0px;top:212.6px;font-size:8.6px;transform:scaleX(0.878);color:#e8e8e8;">489</div>
<div class="t" style="left:329.4px;top:225.3px;font-size:8.6px;transform:scaleX(0.920);color:#e8e8e8;">Id</div>
<div class="t" style="left:407.0px;top:225.3px;font-size:8.6px;transform:scaleX(0.884);color:#e8e8e8;">3609324</div>
<div class="t" style="left:329.4px;top:237.9px;font-size:8.6px;transform:scaleX(0.913);color:#e8e8e8;">Index</div>
<div class="t" style="left:407.0px;top:237.9px;font-size:8.6px;transform:scaleX(0.878);color:#e8e8e8;">1</div>
<div class="t" style="left:329.4px;top:250.5px;font-size:8.6px;transform:scaleX(0.920);color:#e8e8e8;">Left</div>
<div class="t" style="left:407.0px;top:250.5px;font-size:8.6px;transform:scaleX(0.878);color:#e8e8e8;">208</div>
<div class="t" style="left:329.4px;top:263.2px;font-size:8.6px;transform:scaleX(0.834);color:#e8e8e8;">MappedName</div>
<div class="t" style="left:329.4px;top:275.8px;font-size:8.6px;transform:scaleX(0.811);color:#e8e8e8;">Name</div>
<div class="t" style="left:407.0px;top:275.8px;font-size:8.6px;transform:scaleX(0.868);color:#e8e8e8;">WinFormsObject(&quot;Form1&quot;)</div>
<div class="t" style="left:329.4px;top:288.5px;font-size:8.6px;transform:scaleX(0.881);color:#e8e8e8;">NativeClrObject</div>
<div class="t" style="left:407.0px;top:288.5px;font-size:8.6px;transform:scaleX(0.916);color:#e8e8e8;">(Object)</div>
<div class="t" style="left:329.4px;top:301.1px;font-size:8.6px;transform:scaleX(0.892);color:#e8e8e8;">Parent</div>
<div class="t" style="left:407.0px;top:301.1px;font-size:8.6px;transform:scaleX(0.916);color:#e8e8e8;">(Object)</div>
<div class="t" style="left:329.4px;top:313.7px;font-size:8.6px;transform:scaleX(0.871);color:#e8e8e8;">ScreenLeft</div>
<div class="t" style="left:407.0px;top:313.7px;font-size:8.6px;transform:scaleX(0.878);color:#e8e8e8;">208</div>
<div class="t" style="left:329.4px;top:326.4px;font-size:8.6px;transform:scaleX(0.866);color:#e8e8e8;">ScreenTop</div>
<div class="t" style="left:407.0px;top:326.4px;font-size:8.6px;transform:scaleX(0.878);color:#e8e8e8;">208</div>
<div class="t" style="left:329.4px;top:339.0px;font-size:8.6px;transform:scaleX(0.909);color:#e8e8e8;">Top</div>
<div class="t" style="left:407.0px;top:339.0px;font-size:8.6px;transform:scaleX(0.878);color:#e8e8e8;">208</div>
<div class="t" style="left:329.4px;top:351.7px;font-size:8.6px;transform:scaleX(0.825);color:#e8e8e8;">Unicode</div>
<div class="t" style="left:407.0px;top:351.7px;font-size:8.6px;transform:scaleX(0.918);color:#e8e8e8;">true</div>
<div class="t" style="left:329.4px;top:364.3px;font-size:8.6px;transform:scaleX(0.779);color:#e8e8e8;">Visible</div>
<div class="t" style="left:407.0px;top:364.3px;font-size:8.6px;transform:scaleX(0.918);color:#e8e8e8;">true</div>
<div class="t" style="left:329.4px;top:376.9px;font-size:8.6px;transform:scaleX(0.824);color:#e8e8e8;">VisibleOnScreen</div>
<div class="t" style="left:407.0px;top:376.9px;font-size:8.6px;transform:scaleX(0.859);color:#e8e8e8;">false</div>
<div class="t" style="left:309.0px;top:401.6px;font-size:8.6px;transform:scaleX(0.860);color:#e8e8e8;">Description</div>
<div class="t" style="left:672.4px;top:166.8px;font-size:5.6px;transform:scaleX(0.893);color:#9b9b9b;">Match</div>
<div class="t" style="left:666.0px;top:177.8px;font-size:6.0px;transform:scaleX(0.848);color:#000;">File</div>
<div class="t" style="left:704.2px;top:205.6px;font-size:5.6px;transform:scaleX(0.903);color:#a7b3c2;">Form</div>
<div class="t" style="left:-0.8px;top:383.2px;font-size:8.2px;transform-origin:0 0;transform:rotate(-90deg) scaleX(1.021);color:#ffffff;font-weight:bold;">The processes that are not selected in the filter are not displayed.</div>
<!-- annotation box (on top) -->
<svg style="left:0;top:0;" width="1" height="1"><rect x="318.12" y="25.43" width="186.25" height="34.15" rx="0.00" fill="none" stroke="#ffff00" stroke-width="2.45"/></svg>

</body>
</html>
